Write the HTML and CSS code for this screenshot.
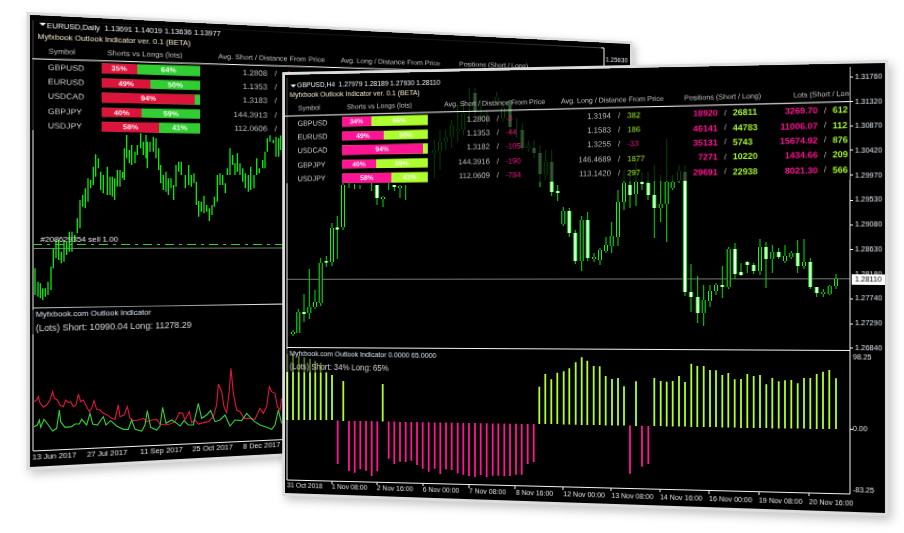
FILE: index.html
```html
<!DOCTYPE html>
<html lang="en">
<head>
<meta charset="utf-8">
<title>Myfxbook Outlook Indicator</title>
<link rel="stylesheet" href="styles.css">
</head>
<body>
<main class="desk">

  <div class="frame warp-back"></div>

  <svg class="plot" viewBox="0 0 904 533" aria-hidden="true">
    <defs>
      <linearGradient id="fade-in" gradientUnits="userSpaceOnUse" x1="33" y1="0" x2="604" y2="0">
        <stop offset="0" stop-color="#2a2a2a"/>
        <stop offset=".8" stop-color="#555"/>
        <stop offset="1" stop-color="#fff"/>
      </linearGradient>
      <linearGradient id="fade-sep" gradientUnits="userSpaceOnUse" x1="33" y1="0" x2="285" y2="0">
        <stop offset="0" stop-color="#cfcfcf"/>
        <stop offset=".45" stop-color="#777"/>
        <stop offset="1" stop-color="#fff"/>
      </linearGradient>
    </defs>
    <g class="axis">
      <path d="M33 20V451L604 425M604 48V440"/>
    </g>
    <path class="edge-top" d="M33 20L604 48"/>
    <path class="edge-sep" d="M33 308L285 304"/>
    <path class="hline" d="M33 248.5L285 248"/>
    <path class="order" d="M33 244.5L285 244.5"/>
    <g transform="translate(30 125) scale(.33333)">
      <path class="ohlc" d="M15 430V510M24 470V515M31 475V520M38 490V525M46 490V515M54 470V510M63 425V495M70 370V430M78 345V400M86 345V405M94 380V415M102 345V410M110 350V390M118 320V380M126 320V380M134 330V350M142 280V325M150 225V310M158 210V245M166 190V250M174 160V230M182 165V190M190 125V180M197 88V155M205 100V130M212 140V195M220 150V205M232 125V210M240 155V210M247 155V215M254 160V225M262 135V185M270 135V185M278 140V160M283 70V165M290 30V100M298 75V115M305 60V120M315 80V115M322 60V90M332 25V70M340 50V90M348 30V100M352 50V130M360 50V80M370 35V80M378 40V100M386 70V135M392 120V175M400 150V195M408 140V200M415 160V210M423 160V190M431 180V225M438 120V185M446 110V140M454 110V150M466 150V190M476 120V180M484 150V185M492 145V175M499 170V240M506 228V275M514 230V260M522 212V265M530 240V260M538 250V288M546 240V270M553 215V245M562 150V230M570 145V180M578 150V180M586 175V205M592 130V150M600 70V150M608 90V120M615 115V150M622 85V140M630 115V150M638 130V170M646 145V190M655 150V200M662 125V195M672 150V190M680 100V150M688 130V145M698 105V130M705 80V130M712 40V80M720 30V50M730 45V55M738 35V95M746 40V95M752 30V75"/>
    </g>
    <g transform="translate(20 350) scale(.33333)">
      <polyline class="line-short" points="42,155 50,150 55,140 60,158 70,172 80,165 90,150 98,125 103,145 112,150 120,165 130,170 137,150 145,158 152,155 160,170 168,165 175,132 182,155 190,150 200,170 208,185 215,175 222,152 230,178 240,180 250,190 262,195 275,205 285,208 295,165 300,200 312,195 322,170 330,205 340,212 355,210 370,205 380,215 395,210 410,208 420,222 435,225 450,222 465,215 478,188 488,190 495,210 500,200 508,185 515,218 525,210 535,222 550,218 565,215 580,200 590,165 595,102 605,125 612,170 620,188 628,120 633,55 640,130 650,180 660,185 672,205 690,205 705,208 720,175 730,190 740,170 748,110 755,125 765,130 772,170 780,180 785,145"/>
      <polyline class="line-long" points="42,230 52,225 58,210 62,232 72,208 85,225 98,243 110,235 118,180 122,215 135,232 155,230 165,222 178,222 185,208 200,225 210,190 218,222 232,225 250,200 258,225 272,212 290,228 310,238 325,238 335,210 345,238 365,243 375,225 382,182 392,232 410,240 420,228 428,172 438,220 455,210 468,218 480,228 492,212 505,225 520,225 535,160 545,205 560,195 572,182 585,215 600,210 615,195 630,228 645,210 665,212 680,190 700,212 720,225 740,232 755,238 765,225 775,180 785,220"/>
    </g>
  </svg>

  <section class="sheet warp-back theme-back">
    <div class="main">
      <div class="panel">
        <p class="title"><span class="caret"></span>EURUSD,Daily&nbsp; 1.13691 1.14019 1.13636 1.13977</p>
        <p class="subtitle">Myfxbook Outlook Indicator ver. 0.1 (BETA)</p>
        <div class="table">
          <div class="thead">
            <span class="th-sym">Symbol</span><span class="th-bar">Shorts vs Longs (lots)</span><span class="th-avs">Avg. Short / Distance From Price</span><span class="th-avl">Avg. Long / Distance From Price</span><span class="th-pos">Positions (Short / Long)</span>
          </div>
          <div class="row"><span class="sym">GBPUSD</span><div class="bar"><b class="seg-s" style="width:35%">35%</b><b class="seg-l">64%</b></div><span class="num">1.2808</span><span class="sl">/</span><span class="neg">-3</span></div>
          <div class="row"><span class="sym">EURUSD</span><div class="bar"><b class="seg-s" style="width:49%">49%</b><b class="seg-l">50%</b></div><span class="num">1.1353</span><span class="sl">/</span></div>
          <div class="row"><span class="sym">USDCAD</span><div class="bar"><b class="seg-s" style="width:94%">94%</b><b class="seg-l"></b></div><span class="num">1.3183</span><span class="sl">/</span></div>
          <div class="row"><span class="sym">GBPJPY</span><div class="bar"><b class="seg-s" style="width:40%">40%</b><b class="seg-l">59%</b></div><span class="num">144.3913</span><span class="sl">/</span></div>
          <div class="row"><span class="sym">USDJPY</span><div class="bar"><b class="seg-s" style="width:58%">58%</b><b class="seg-l">41%</b></div><span class="num">112.0606</span><span class="sl">/</span></div>
        </div>
      </div>
      <p class="order-label">#208629354 sell 1.00</p>
      <div class="pane-label pane-back">
        <p class="pane-name">Myfxbook.com Outlook Indicator</p>
        <p class="pane-value">(Lots) Short: 10990.04 Long: 11278.29</p>
      </div>
      <div class="times times-back">
        <span>13 Jun 2017</span><span>27 Jul 2017</span><span>11 Sep 2017</span><span>25 Oct 2017</span><span>8 Dec 2017</span>
      </div>
    </div>
    <div class="scale scale-back"><span>1.25630</span></div>
  </section>

  <div class="frame warp-front"></div>

  <svg class="plot" viewBox="0 0 904 533" aria-hidden="true">
    <defs>
      <path id="bodies-bear" d="M293 332V334M298.3 312V333M309.3 307V313M315 302V307M320.7 263V303M332 228V262M343 185V227M383 197V199M400 186V188M434.3 150V153M440 142V151M445.7 137V142M451.7 125V137M457.7 129V131M463.3 113V130M496.7 97V102M503 108V118M528.3 146V148M545.7 162V175M563.3 211V224M581.7 220V261M594 257V259M600 250V260M606 245V251M611.7 236V246M618 202V237M624 183V202M636 182V194M660.7 204V208M666.7 182V204M672.7 182V188M679 171V180M703.7 300V313M710 291V301M716 285V291M728.7 249V287M760 247V271M772.3 252V259M785 256V261M791.3 253V257M804 262V266M823.3 292V294M829.7 286V294M836 279V286"/>
      <path id="bodies-bull" d="M304 312V314M326.3 261V262.5M337.3 227.5V229.5M377 185V198M394.3 185V187M475 93V112M510 100V127M522.3 130V148M534 148V153M540 153V174M551.7 162V192M557.7 191V193M569.3 211V233M575.3 233V261M587.7 220V258M630 185V195M642 182V184M648.3 183V195M654.3 195V208M685 172V292M691 292V297M697.7 297V313M722.3 285V287M735 249V274M741 272V275M747.3 262V265M753.7 265V271M766 247V259M778.7 252V257M797.7 253V266M810.3 262V287M816.7 287V293"/>
    </defs>
    <path class="hline" d="M287 279.3L850 278.8"/>
    <path class="wick" d="M293 330V336M298.3 309V333M304 294V322M309.3 269V319M315 290V309M320.7 258V306M326.3 256V267M332 223V266M337.3 216V259M343 183V230M349 183V188M354.5 184V189M360 185V189M371.7 183V191M377 185V205M383 196V207M388.7 183V190M394.3 185V191M400 185V198M405.7 185V200M434.3 140V178M440 130V170M445.7 130V150M451.7 120V148M457.7 105V142M463.5 100V135M469.3 88V122M475 88V115M481 100V120M487 110V125M496.7 92V104M503 102V122M510 100V132M516.7 118V138M522.3 123V150M528.3 141V152M534 140V158M540 145V187M545.7 150V180M551.7 150V196M557.7 185V201M563.3 207V226M569.3 208V237M575.3 230V264M581.7 216V271M587.7 212V261M594 253V262M600 248V265M606 237V253M611.7 222V253M618 190V246M624 170V210M630 172V208M636 160V206M642 172V190M648 172V200M654.3 165V238M660.7 175V222M666.7 139V242M672.7 175V190M679 165V183M685 165V296M691 264V312M697.7 276V323M703.7 285V326M710 285V307M716 283V295M722.3 266V298M728.7 247V289M735 243V279M741 263V276M747.3 261V273M753.7 263V274M760 239V275M766 242V288M772.3 245V273M778.7 248V259M785 245V263M791.3 251V259M797.7 240V273M804 239V269M810.3 258V289M816.7 287V297M823.3 289V297M829.7 285V295M836 274V289"/>
    <use class="body-edge" href="#bodies-bear"/>
    <use class="body-edge" href="#bodies-bull"/>
    <use class="body-fill-bear" href="#bodies-bear"/>
    <use class="body-fill-bull" href="#bodies-bull"/>
    <path class="hist-long" d="M287.3 354V420M293 354V420M298.7 355.7V420M304.3 357.3V420M310 358.7V420M315.3 360.7V420M320.7 362.7V420M326.3 371.7V420M332 375V420M343.3 381V421M382.7 384V421.5M539.3 386.7V424M545.3 374V424M551.3 379.3V424M557.3 372.7V424M563.7 371.3V424.5M569.3 368.3V424.5M575.7 362.3V424.7M581.7 357.3V425M587.3 360.7V425M593.7 366V425M599.7 366.3V425M605.7 376V425.5M612 379V425.5M618 378V425.5M624 386.3V425.5M636 381.3V426M654.3 378V426M660.7 381V426M666.7 381.7V426.5M672.7 381V426.5M679 376V426.5M685 382V426.5M691.3 363.7V427M697.3 366V427M703.7 366V427M710 370V427M716 370.3V427M722.3 375V427.5M728.3 373V427.5M734.7 379.3V427.5M741 379V428M747.3 374V428M753.7 376V428M760 375V428M766.3 384.3V428M772.3 378V428.5M778.7 381.3V428.5M785 380.3V428.5M791.3 380V428.5M797.7 383.3V428.5M804 378V428.5M810.3 378V429M816.7 374V429M823 371.7V429M829.3 370V429M836 378.3V429"/>
    <path class="hist-short" d="M337.7 420.5V464M349 421V471.3M354.7 421V472.7M360.3 421V469.3M366 421V470.7M371.7 421V476M377.3 421.5V471.3M388.7 421.5V458.7M394.3 421.5V464M400 422V461.7M405.7 422V462M411.3 422V460.7M417 422V465M422.7 422.3V468.7M428.7 422.3V471.7M434.7 422.5V468.7M440.3 422.5V474M446 422.6V469.3M451.7 422.7V470M457.7 422.8V473.3M463.3 423V474.7M469 423V476M475 423V477M480.7 423.2V475M486.7 423.3V477.3M492.7 423.4V475.7M498.3 423.5V475.7M504.3 423.6V476.3M510 423.7V476M516 423.8V474.7M521.7 423.9V474.7M527.7 424V464M533.7 424V462M630 425.5V473.7M642 425.8V466.7M648.3 425.9V464"/>
    <g class="axis">
      <path d="M287 78V480L850 494V67"/>
      <path d="M287 347.5L850 350.5"/>
      <path d="M332 481V484M377 482V485M423 483V486M469 485V488M515 486V489M563 487V490M611 488V491M660 489V492M709 491V494M759 492V495M809 493V496"/>
      <path d="M850 77H853M850 101.5H853M850 126H853M850 150H853M850 175H853M850 200.5H853M850 225H853M850 249.5H853M850 299H853M850 324H853M850 348H853M850 429.3H853"/>
    </g>
  </svg>

  <section class="sheet warp-front theme-front">
    <div class="main">
      <div class="panel">
        <p class="title"><span class="caret"></span>GBPUSD,H4&nbsp; 1.27979 1.28189 1.27930 1.28110</p>
        <p class="subtitle">Myfxbook Outlook Indicator ver. 0.1 (BETA)</p>
        <div class="table">
          <div class="thead">
            <span class="th-sym">Symbol</span><span class="th-bar">Shorts vs Longs (lots)</span><span class="th-avs">Avg. Short / Distance From Price</span><span class="th-avl">Avg. Long / Distance From Price</span><span class="th-pos">Positions (Short / Long)</span><span class="th-lot">Lots (Short / Long)</span>
          </div>
          <div class="row"><span class="sym">GBPUSD</span><div class="bar"><b class="seg-s" style="width:34%">34%</b><b class="seg-l">66%</b></div><span class="num">1.2808</span><span class="sl">/</span><span class="neg">-3</span><span class="num">1.3194</span><span class="sl">/</span><span class="pos">382</span><span class="amt neg">18920</span><span class="sl">/</span><span class="amt pos">26811</span><span class="amt neg">3269.70</span><span class="sl">/</span><span class="amt pos">612</span></div>
          <div class="row"><span class="sym">EURUSD</span><div class="bar"><b class="seg-s" style="width:49%">49%</b><b class="seg-l">50%</b></div><span class="num">1.1353</span><span class="sl">/</span><span class="neg">-44</span><span class="num">1.1583</span><span class="sl">/</span><span class="pos">186</span><span class="amt neg">46141</span><span class="sl">/</span><span class="amt pos">44783</span><span class="amt neg">11006.07</span><span class="sl">/</span><span class="amt pos">112</span></div>
          <div class="row"><span class="sym">USDCAD</span><div class="bar"><b class="seg-s" style="width:94%">94%</b><b class="seg-l"></b></div><span class="num">1.3182</span><span class="sl">/</span><span class="neg">-105</span><span class="num">1.3255</span><span class="sl">/</span><span class="neg">-33</span><span class="amt neg">35131</span><span class="sl">/</span><span class="amt pos">5743</span><span class="amt neg">15674.92</span><span class="sl">/</span><span class="amt pos">876</span></div>
          <div class="row"><span class="sym">GBPJPY</span><div class="bar"><b class="seg-s" style="width:40%">40%</b><b class="seg-l">59%</b></div><span class="num">144.3916</span><span class="sl">/</span><span class="neg">-190</span><span class="num">146.4689</span><span class="sl">/</span><span class="pos">1877</span><span class="amt neg">7271</span><span class="sl">/</span><span class="amt pos">10220</span><span class="amt neg">1434.66</span><span class="sl">/</span><span class="amt pos">209</span></div>
          <div class="row"><span class="sym">USDJPY</span><div class="bar"><b class="seg-s" style="width:58%">58%</b><b class="seg-l">41%</b></div><span class="num">112.0609</span><span class="sl">/</span><span class="neg">-784</span><span class="num">113.1420</span><span class="sl">/</span><span class="pos">297</span><span class="amt neg">29691</span><span class="sl">/</span><span class="amt pos">22938</span><span class="amt neg">8021.30</span><span class="sl">/</span><span class="amt pos">566</span></div>
        </div>
      </div>
      <div class="pane-label pane-front">
        <p class="pane-name">Myfxbook.com Outlook Indicator 0.0000 65.0000</p>
        <p class="pane-value">(Lots) Short: 34% Long: 65%</p>
      </div>
      <div class="times times-front">
        <span>31 Oct 2018</span><span>1 Nov 08:00</span><span>2 Nov 16:00</span><span>6 Nov 00:00</span><span>7 Nov 08:00</span><span>8 Nov 16:00</span><span>12 Nov 00:00</span><span>13 Nov 08:00</span><span>14 Nov 16:00</span><span>16 Nov 00:00</span><span>19 Nov 08:00</span><span>20 Nov 16:00</span>
      </div>
    </div>
    <div class="scale scale-front">
      <div class="prices">
        <span>1.31760</span><span>1.31320</span><span>1.30870</span><span>1.30420</span><span>1.29970</span><span>1.29530</span><span>1.29080</span><span>1.28630</span><span>1.28180</span><span>1.27740</span><span>1.27290</span><span>1.26840</span>
      </div>
      <div class="levels">
        <span>98.25</span><span class="level-zero">0.00</span><span class="level-low">-83.25</span>
      </div>
      <span class="current">1.28110</span>
    </div>
  </section>

</main>
</body>
</html>
```

FILE: styles.css
```css
* { box-sizing: border-box; }

html, body { margin: 0; padding: 0; background: #fff; }

.desk {
  position: relative;
  width: 904px;
  height: 533px;
  overflow: hidden;
  font-family: "Liberation Sans", Arial, sans-serif;
  color: #d8d8d8;
}

.frame, .sheet, .plot { position: absolute; left: 0; top: 0; }

.plot { width: 904px; height: 533px; display: block; pointer-events: none; }

.frame, .sheet { width: 600px; transform-origin: 0 0; }

.warp-back {
  height: 440px;
  transform: matrix3d(1.163817, .059773, 0, .000260017, 0, 1.027273, 0, 0, 0, 0, 1, 0, 30, 15, 0, 1);
}

.warp-front {
  height: 432px;
  transform: matrix3d(.895112, -.027467, 0, -.000118519, 0, .967593, 0, 0, 0, 0, 1, 0, 285, 75, 0, 1);
}

.frame {
  background: #000;
  box-shadow: 0 0 0 3px #dcdcdc, 3px 4px 9px 3px rgba(0, 0, 0, .24);
}

.theme-back { --short: #dc143c; --long: #32cd32; }
.theme-front { --short: #ff1493; --long: #adff2f; }

.sheet { display: flex; }
.sheet p { margin: 0; }

.main { width: 567px; display: flex; flex-direction: column; }

.panel { height: 112px; flex: none; padding-top: 6px; background: rgba(0, 0, 0, .72); overflow: hidden; }
.theme-back .panel { padding: 3.5px 0 0 1.5px; }

.title, .subtitle { height: 10px; font-size: 7.2px; line-height: 10px; white-space: nowrap; color: #f2f2f2; }
.title { padding-left: 13px; position: relative; font-size: 7px; }
.subtitle { padding-left: 5px; color: #f0e6c8; }
.theme-back .title, .theme-back .subtitle { height: 11px; line-height: 11px; }

.caret {
  position: absolute;
  left: 6px;
  top: 3.5px;
  width: 0;
  height: 0;
  border: 3px solid transparent;
  border-top: 3.5px solid #fff;
  border-bottom: 0;
}

.table { width: 567px; margin-top: 3.5px; transform: skewY(-.6deg); transform-origin: 0 0; overflow: hidden; }
.theme-back .table { margin-top: 4px; }

.thead {
  display: grid;
  grid-template-columns: 52px 102px 119px 122px 105px 1fr;
  padding: 0 0 3px 14px;
  height: 13px;
  font-size: 7.1px;
  line-height: 10px;
  white-space: nowrap;
  color: #cfcfcf;
  border-bottom: 1px solid #fff;
}

.row {
  display: grid;
  grid-template-columns: 47.5px 90px 64px 16px 65px 41px 16px 45px 43.5px 14.5px 35px 46px 14px 16px;
  align-items: center;
  height: 14.4px;
  padding-left: 13.5px;
  font-size: 7.8px;
  white-space: nowrap;
}

.sym { font-size: 7.6px; color: #dcdcdc; }

.bar { display: flex; height: 9.6px; background: var(--long); }

.bar b {
  display: block;
  font-size: 7px;
  line-height: 9.6px;
  text-align: center;
  color: #fff;
}

.seg-s { flex: none; background: var(--short); }
.seg-l { flex: 1; background: var(--long); }

.num { text-align: right; color: #c8c8c8; }
.sl { text-align: center; color: #d0d0d0; }
.neg { color: var(--short); }
.pos { color: var(--long); }

.amt { font-size: 8.6px; font-weight: 700; }
.amt.neg { text-align: right; }

.sheet .order-label { margin-top: 102px; height: 10px; padding-left: 9px; font-size: 7.2px; line-height: 10px; color: #e6e6e6; flex: none; }

.pane-label { flex: none; padding-left: 5px; background: rgba(0, 0, 0, .55); width: 160px; }
.pane-back { margin-top: 63px; width: 200px; }
.pane-front { margin-top: 170.5px; }

.pane-name { height: 10px; font-size: 7.2px; line-height: 10px; color: #d8e4ee; white-space: nowrap; }
.pane-value { height: 14px; padding-top: 4px; font-size: 8.2px; line-height: 10px; color: #d8d8d8; white-space: nowrap; }

.times {
  margin-top: auto;
  display: grid;
  grid-template-columns: repeat(12, 47.9px);
  padding-left: 2px;
  font-size: 7px;
  line-height: 10px;
  white-space: nowrap;
  color: #e0e0e0;
}

.times-back { padding-bottom: 4px; }
.times-front { padding-bottom: 3px; }

.scale { position: relative; width: 33px; font-size: 7px; line-height: 10px; color: #dfe6ee; }
.scale span { display: block; height: 10px; white-space: nowrap; }

.scale-back { padding: 14px 0 0 5px; }

.prices { display: flex; flex-direction: column; gap: 13.72px; padding: 7.9px 0 0 5px; }

.levels { display: flex; flex-direction: column; padding-left: 3px; margin-top: -.8px; }
.level-zero { margin-top: 59.3px; }
.level-low { margin-top: 48.5px; }

.current {
  position: absolute;
  left: 2px;
  top: 202.5px;
  width: 31px;
  background: #fff;
  color: #000;
  padding-left: 3px;
}

.axis path { fill: none; stroke: #f2f2f2; stroke-width: 1; }
.edge-top { fill: none; stroke: url(#fade-in); stroke-width: 1; }
.edge-sep { fill: none; stroke: url(#fade-sep); stroke-width: 1; }
.hline { fill: none; stroke: #7a7a7a; stroke-width: 1; }
.order { fill: none; stroke: #32cd32; stroke-width: 1; stroke-dasharray: 9 5 3 5; }

.ohlc { fill: none; stroke: #00ee00; stroke-width: 3.9; }
.line-short { fill: none; stroke: #dc143c; stroke-width: 3.4; }
.line-long { fill: none; stroke: #32cd32; stroke-width: 3.4; }

.wick { fill: none; stroke: #00e000; stroke-width: 1; }
.body-edge { fill: none; stroke: #00ff00; stroke-width: 4; }
.body-fill-bear { fill: none; stroke: #000; stroke-width: 2; }
.body-fill-bull { fill: none; stroke: #fff; stroke-width: 2; }

.hist-long { fill: none; stroke: #adff2f; stroke-width: 1.8; }
.hist-short { fill: none; stroke: #ff1493; stroke-width: 1.8; }
```
